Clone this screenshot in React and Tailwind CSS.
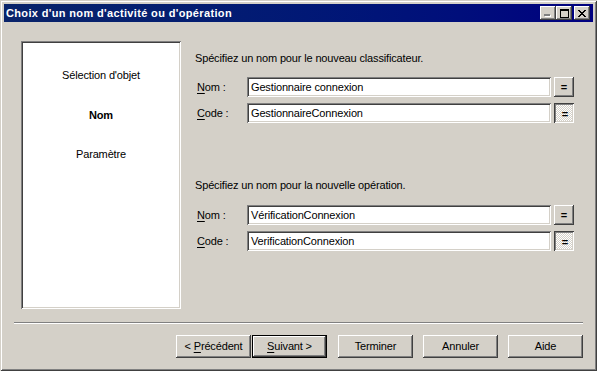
import React from 'react';

const raised = 'bg-[#d4d0c8] shadow-[inset_-1px_-1px_#404040,inset_1px_1px_#ffffff,inset_-2px_-2px_#808080,inset_2px_2px_#d4d0c8]';
const sunken = 'shadow-[inset_1px_1px_#808080,inset_-1px_-1px_#ffffff,inset_2px_2px_#404040,inset_-2px_-2px_#d4d0c8]';

const Ul = ({ children }) => <span className="underline underline-offset-[2px]">{children}</span>;

const TitleButton = ({ children, className = '' }) => (
    <div className={`w-[16px] h-[14px] flex items-center justify-center ${raised} ${className}`}>
        {children}
    </div>
);

const Field = ({ label, value, pressed }) => (
    <div className="flex items-center h-[20px]">
        <div className="w-[52px] pl-[2px]">{label}</div>
        <div className={`w-[304px] h-[20px] bg-white flex items-center pl-[4px] ${sunken}`}>{value}</div>
        {pressed ? (
            <div className="ml-[3px] w-[20px] h-[20px] flex items-center justify-center font-bold bg-[image:repeating-conic-gradient(#ffffff_0%_25%,#d4d0c8_0%_50%)] bg-size-[2px_2px] shadow-[inset_1px_1px_#404040,inset_-1px_-1px_#ffffff,inset_2px_2px_#808080,inset_-2px_-2px_#d4d0c8]">
                <span className="translate-x-[1px] translate-y-[1px]">=</span>
            </div>
        ) : (
            <div className={`ml-[3px] w-[20px] h-[20px] flex items-center justify-center font-bold ${raised}`}>=</div>
        )}
    </div>
);

const Button = ({ children, isDefault, className = '' }) => (
    <div className={`w-[75px] h-[23px] ${isDefault ? 'border border-black' : ''} ${className}`}>
        <div className={`w-full h-full flex items-center justify-center ${raised}`}>
            <span>{children}</span>
        </div>
    </div>
);

export default function App() {
    return (
        <div
            className="w-[597px] h-[371px] bg-[#d4d0c8] p-[4px] flex flex-col text-[11px] leading-[13px] tracking-[-0.15px] text-black shadow-[inset_1px_1px_#d4d0c8,inset_-1px_-1px_#404040,inset_2px_2px_#ffffff,inset_-2px_-2px_#808080]"
            style={{ fontFamily: '"Liberation Sans", Arial, sans-serif' }}
        >
            {/* title bar */}
            <div className="h-[18px] flex items-center bg-linear-to-r from-[#0a246a] to-[#000080] pl-[2px] pr-[3px]">
                <div className="text-white font-bold text-[11px] tracking-[0.35px]">Choix d'un nom d'activité ou d'opération</div>
                <div className="ml-auto flex items-center">
                    <TitleButton>
                        <svg width="8" height="7" shapeRendering="crispEdges">
                            <rect x="1" y="5" width="6" height="2" fill="#ffffff" />
                            <rect x="0" y="4" width="6" height="2" fill="#808080" />
                        </svg>
                    </TitleButton>
                    <TitleButton>
                        <svg width="9" height="9" shapeRendering="crispEdges">
                            <rect x="0" y="0" width="9" height="2" fill="#000" />
                            <rect x="0" y="0" width="1" height="9" fill="#000" />
                            <rect x="8" y="0" width="1" height="9" fill="#000" />
                            <rect x="0" y="8" width="9" height="1" fill="#000" />
                        </svg>
                    </TitleButton>
                    <TitleButton className="ml-[2px]">
                        <svg width="8" height="7" shapeRendering="crispEdges">
                            <rect x="0" y="0" width="2" height="1" fill="#000" />
                            <rect x="6" y="0" width="2" height="1" fill="#000" />
                            <rect x="1" y="1" width="2" height="1" fill="#000" />
                            <rect x="5" y="1" width="2" height="1" fill="#000" />
                            <rect x="2" y="2" width="4" height="1" fill="#000" />
                            <rect x="3" y="3" width="2" height="1" fill="#000" />
                            <rect x="2" y="4" width="4" height="1" fill="#000" />
                            <rect x="1" y="5" width="2" height="1" fill="#000" />
                            <rect x="5" y="5" width="2" height="1" fill="#000" />
                            <rect x="0" y="6" width="2" height="1" fill="#000" />
                            <rect x="6" y="6" width="2" height="1" fill="#000" />
                        </svg>
                    </TitleButton>
                </div>
            </div>

            {/* body */}
            <div className="flex-1 flex flex-col">
                <div className="flex pl-[17px] pt-[19px]">
                    <div className={`w-[160px] h-[268px] bg-white flex flex-col items-center pt-[28px] ${sunken}`}>
                        <div>Sélection d'objet</div>
                        <div className="mt-[27px] font-bold">Nom</div>
                        <div className="mt-[26px]">Paramètre</div>
                    </div>

                    <div className="ml-[14px] flex flex-col">
                        <div className="mt-[11px]">Spécifiez un nom pour le nouveau classificateur.</div>
                        <div className="mt-[12px]">
                            <Field label={<><Ul>N</Ul>om :</>} value="Gestionnaire connexion" />
                        </div>
                        <div className="mt-[6px]">
                            <Field label={<><Ul>C</Ul>ode :</>} value="GestionnaireConnexion" pressed />
                        </div>

                        <div className="mt-[56px]">Spécifiez un nom pour la nouvelle opération.</div>
                        <div className="mt-[13px]">
                            <Field label={<><Ul>N</Ul>om :</>} value="VérificationConnexion" />
                        </div>
                        <div className="mt-[6px]">
                            <Field label={<><Ul>C</Ul>ode :</>} value="VerificationConnexion" pressed />
                        </div>
                    </div>
                </div>

                {/* separator */}
                <div className="mt-[13px] ml-[10px] w-[569px] h-[2px] border-t border-t-[#808080] border-b border-b-white" />

                {/* buttons */}
                <div className="mt-[11px] ml-[172px] flex">
                    <Button>&lt; <Ul>P</Ul>récédent</Button>
                    <Button isDefault className="ml-[1px]"><Ul>S</Ul>uivant &gt;</Button>
                    <Button className="ml-[11px]">Terminer</Button>
                    <Button className="ml-[10px]">Annuler</Button>
                    <Button className="ml-[10px]">Aide</Button>
                </div>
            </div>
        </div>
    );
}
